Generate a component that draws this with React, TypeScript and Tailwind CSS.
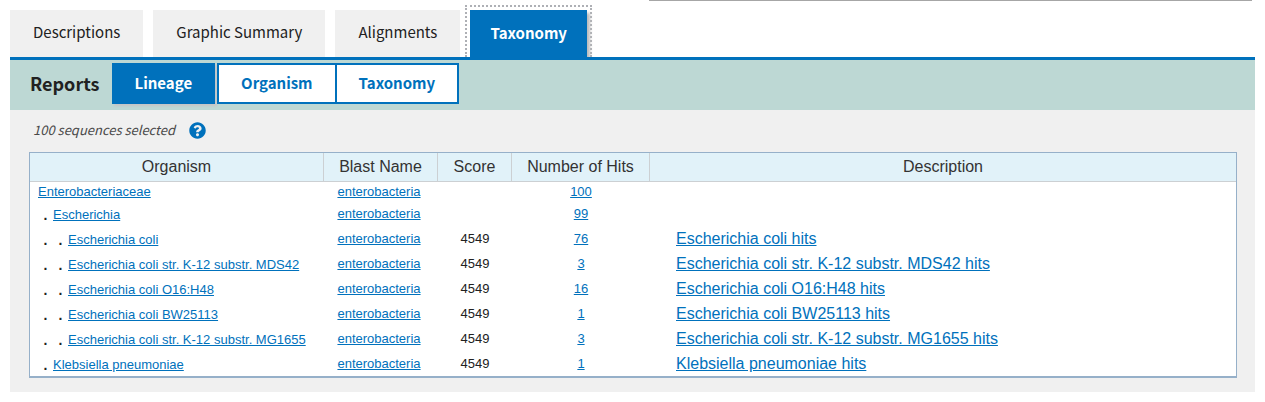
import React from "react";

type Hit = {
  depth: number;
  name: string;
  score?: string;
  hits: number;
  description?: string;
};

const rows: Hit[] = [
  { depth: 0, name: "Enterobacteriaceae", hits: 100 },
  { depth: 1, name: "Escherichia", hits: 99 },
  { depth: 2, name: "Escherichia coli", score: "4549", hits: 76, description: "Escherichia coli hits" },
  { depth: 2, name: "Escherichia coli str. K-12 substr. MDS42", score: "4549", hits: 3, description: "Escherichia coli str. K-12 substr. MDS42 hits" },
  { depth: 2, name: "Escherichia coli O16:H48", score: "4549", hits: 16, description: "Escherichia coli O16:H48 hits" },
  { depth: 2, name: "Escherichia coli BW25113", score: "4549", hits: 1, description: "Escherichia coli BW25113 hits" },
  { depth: 2, name: "Escherichia coli str. K-12 substr. MG1655", score: "4549", hits: 3, description: "Escherichia coli str. K-12 substr. MG1655 hits" },
  { depth: 1, name: "Klebsiella pneumoniae", score: "4549", hits: 1, description: "Klebsiella pneumoniae hits" },
];

const link = "text-[#0071bc] underline";

function Tab({ children }: { children: React.ReactNode }) {
  return (
    <button type="button" role="tab" aria-selected="false" className="h-[47px] bg-[#f0f0f0] px-[23px] pb-1 text-[15px] leading-6 text-[#212121]">
      {children}
    </button>
  );
}

function HelpIcon() {
  return (
    <svg viewBox="0 0 512 512" className="size-[17px]" fill="#0071bc" aria-hidden="true">
      <path d="M504 256c0 136.997-111.043 248-248 248S8 392.997 8 256C8 119.083 119.043 8 256 8s248 111.083 248 248zM262.655 90c-54.497 0-89.255 22.957-116.549 63.758-3.536 5.286-2.353 12.415 2.715 16.258l34.699 26.31c5.205 3.947 12.621 3.008 16.665-2.122 17.864-22.658 30.113-35.797 57.303-35.797 20.429 0 45.698 13.148 45.698 32.958 0 14.976-12.363 22.667-32.534 33.976C247.128 238.528 216 254.941 216 296v4c0 6.627 5.373 12 12 12h56c6.627 0 12-5.373 12-12v-1.333c0-28.462 83.186-29.647 83.186-106.667 0-58.002-60.165-102-116.531-102zM256 338c-25.365 0-46 20.635-46 46 0 25.364 20.635 46 46 46s46-20.636 46-46c0-25.365-20.635-46-46-46z" />
    </svg>
  );
}

export default function App() {
  return (
    <main className="bg-white px-[10px] font-['Noto_Sans_CJK_SC','Open_Sans',sans-serif] text-[#212121]">
      <div className="mr-[3px] ml-auto h-px w-[603px] max-w-1/2 bg-[#a6a6a6]" />

      <div role="tablist" className="flex border-b-[3px] border-[#0071bc] pt-1">
        <div className="flex items-end gap-[10px]">
          <Tab>Descriptions</Tab>
          <Tab>Graphic Summary</Tab>
          <Tab>Alignments</Tab>
        </div>
        <div className="ml-[5px] overflow-y-clip border-2 border-b-0 border-dotted border-[#aeb0b5] px-[3px] pt-[3px]">
          <button type="button" role="tab" aria-selected="true" className="block h-[47px] bg-[#0071bc] px-5 pb-[2px] text-[15px] leading-6 font-bold text-white shadow-[3px_3px_3px_#bbb]">
            Taxonomy
          </button>
        </div>
      </div>

      <div className="flex h-[50px] items-start bg-[#bdd8d4] pt-[3px] pl-5">
        <h2 className="mr-3 text-[18px] leading-[41px] font-bold">Reports</h2>
        <div className="flex text-[15px] leading-6 font-bold">
          <button type="button" className="mr-[2px] h-[41px] bg-[#0071bc] px-[23px] pb-[2px] text-white shadow-[2px_2px_2px_#c5c5c8]">Lineage</button>
          <button type="button" className="h-[41px] border-2 border-[#0071bc] bg-white px-[22px] pb-[2px] text-[#0071bc]">Organism</button>
          <button type="button" className="-ml-[2px] h-[41px] border-2 border-[#0071bc] bg-white px-[22px] pb-[2px] text-[#0071bc]">Taxonomy</button>
        </div>
      </div>

      <section className="bg-[#f0f0f0] pr-[18px] pb-[14px] pl-[19px]">
        <div className="flex h-[42px] items-center gap-[14px] pb-[2px] pl-1 text-[#494949]">
          <em className="text-[13px] leading-5">100 sequences selected</em>
          <button type="button" aria-label="Help">
            <HelpIcon />
          </button>
        </div>

        <table className="w-full table-fixed border-separate border-spacing-0 border border-b-2 border-[#96b0c9] bg-white font-['Liberation_Sans',Arial,sans-serif]">
          <colgroup>
            <col className="w-[294px]" />
            <col className="w-[114px]" />
            <col className="w-[74px]" />
            <col className="w-[138px]" />
            <col />
          </colgroup>
          <thead>
            <tr className="h-[29px] bg-[#e1f2f9] text-[16px] leading-7 text-[#333]">
              <th className="border-r border-b border-[#ccd0d3] p-0 font-normal">Organism</th>
              <th className="border-r border-b border-[#ccd0d3] p-0 font-normal">Blast Name</th>
              <th className="border-r border-b border-[#ccd0d3] p-0 font-normal">Score</th>
              <th className="border-r border-b border-[#ccd0d3] p-0 font-normal">Number of Hits</th>
              <th className="border-b border-[#ccd0d3] p-0 font-normal">Description</th>
            </tr>
          </thead>
          <tbody className="text-[13px] leading-5">
            {rows.map((row) => (
              <tr key={row.name} className={row.description ? "h-[25px]" : row.depth ? "h-6" : "h-5"}>
                <td className={row.depth ? "p-0 pt-[2px] pl-2" : "p-0 pl-2"}>
                  <div className="flex whitespace-nowrap">
                    {Array.from({ length: row.depth }, (_, i) => (
                      <span key={i} className="w-[15px] text-center text-[14px] font-bold">.</span>
                    ))}
                    <a href="#lineage" className={link}>{row.name}</a>
                  </div>
                </td>
                <td className="p-0 pr-1 text-center"><a href="#blast" className={link}>enterobacteria</a></td>
                <td className="p-0 text-center">{row.score}</td>
                <td className="p-0 text-center"><a href="#hits" className={link}>{row.hits}</a></td>
                <td className="p-0 pl-[26px] text-[16px]">
                  {row.description && <a href="#description" className={link}>{row.description}</a>}
                </td>
              </tr>
            ))}
          </tbody>
        </table>
      </section>
    </main>
  );
}
